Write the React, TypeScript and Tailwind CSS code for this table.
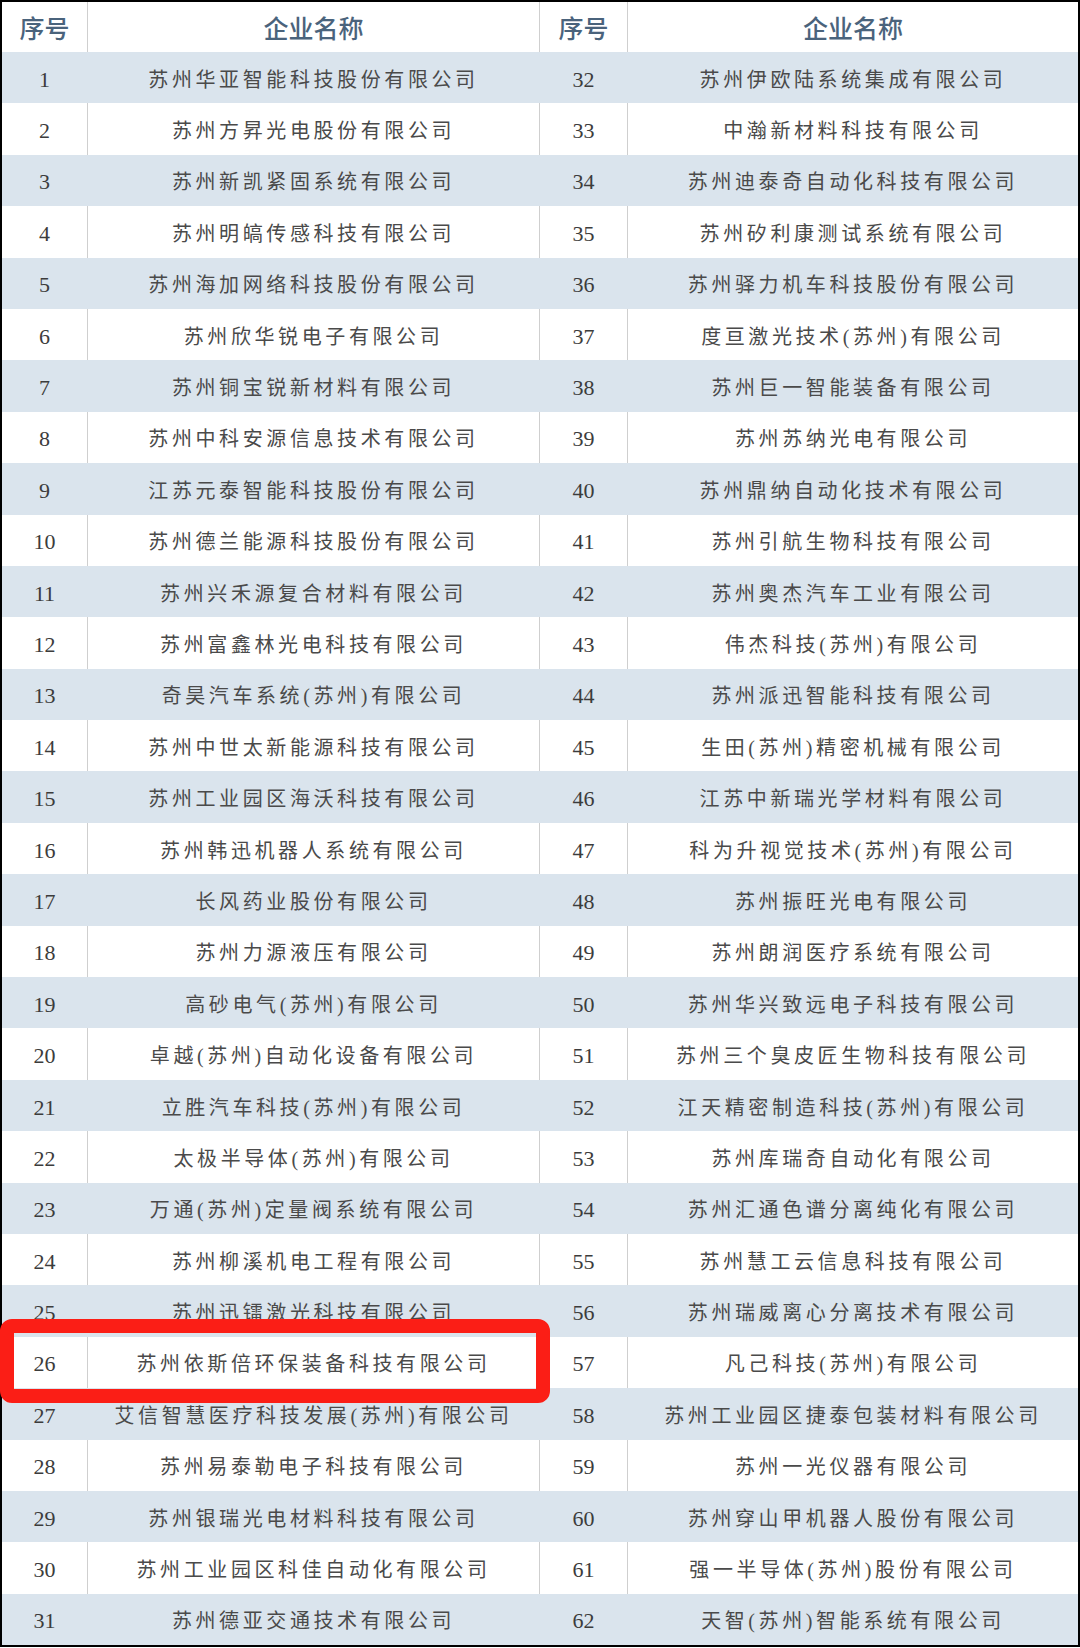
import React from 'react';

const left: string[] = [
  '苏州华亚智能科技股份有限公司',
  '苏州方昇光电股份有限公司',
  '苏州新凯紧固系统有限公司',
  '苏州明皜传感科技有限公司',
  '苏州海加网络科技股份有限公司',
  '苏州欣华锐电子有限公司',
  '苏州铜宝锐新材料有限公司',
  '苏州中科安源信息技术有限公司',
  '江苏元泰智能科技股份有限公司',
  '苏州德兰能源科技股份有限公司',
  '苏州兴禾源复合材料有限公司',
  '苏州富鑫林光电科技有限公司',
  '奇昊汽车系统(苏州)有限公司',
  '苏州中世太新能源科技有限公司',
  '苏州工业园区海沃科技有限公司',
  '苏州韩迅机器人系统有限公司',
  '长风药业股份有限公司',
  '苏州力源液压有限公司',
  '高砂电气(苏州)有限公司',
  '卓越(苏州)自动化设备有限公司',
  '立胜汽车科技(苏州)有限公司',
  '太极半导体(苏州)有限公司',
  '万通(苏州)定量阀系统有限公司',
  '苏州柳溪机电工程有限公司',
  '苏州迅镭激光科技有限公司',
  '苏州依斯倍环保装备科技有限公司',
  '艾信智慧医疗科技发展(苏州)有限公司',
  '苏州易泰勒电子科技有限公司',
  '苏州银瑞光电材料科技有限公司',
  '苏州工业园区科佳自动化有限公司',
  '苏州德亚交通技术有限公司',
];

const right: string[] = [
  '苏州伊欧陆系统集成有限公司',
  '中瀚新材料科技有限公司',
  '苏州迪泰奇自动化科技有限公司',
  '苏州矽利康测试系统有限公司',
  '苏州驿力机车科技股份有限公司',
  '度亘激光技术(苏州)有限公司',
  '苏州巨一智能装备有限公司',
  '苏州苏纳光电有限公司',
  '苏州鼎纳自动化技术有限公司',
  '苏州引航生物科技有限公司',
  '苏州奥杰汽车工业有限公司',
  '伟杰科技(苏州)有限公司',
  '苏州派迅智能科技有限公司',
  '生田(苏州)精密机械有限公司',
  '江苏中新瑞光学材料有限公司',
  '科为升视觉技术(苏州)有限公司',
  '苏州振旺光电有限公司',
  '苏州朗润医疗系统有限公司',
  '苏州华兴致远电子科技有限公司',
  '苏州三个臭皮匠生物科技有限公司',
  '江天精密制造科技(苏州)有限公司',
  '苏州库瑞奇自动化有限公司',
  '苏州汇通色谱分离纯化有限公司',
  '苏州慧工云信息科技有限公司',
  '苏州瑞威离心分离技术有限公司',
  '凡己科技(苏州)有限公司',
  '苏州工业园区捷泰包装材料有限公司',
  '苏州一光仪器有限公司',
  '苏州穿山甲机器人股份有限公司',
  '强一半导体(苏州)股份有限公司',
  '天智(苏州)智能系统有限公司',
];

const cols = 'grid grid-cols-[85px_452px_88px_1fr]';
const nameFont = "font-['Liberation_Serif','Noto_Sans_CJK_SC',serif]";
const numFont = "font-['Liberation_Serif',serif]";

export default function App() {
  return (
    <div className="relative w-[1080px] bg-white">
      <div className="border-2 border-black">
        {/* Header */}
        <div className={`${cols} h-[50px] bg-white text-[25px] font-medium text-[#4a637c] font-['Noto_Sans_CJK_SC',sans-serif]`}>
          <div className="flex items-center justify-center pt-[2px]">序号</div>
          <div className="flex items-center justify-center border-l border-[#cfcfcf] pt-[2px]">企业名称</div>
          <div className="flex items-center justify-center border-l border-[#cfcfcf] pt-[2px]">序号</div>
          <div className="flex items-center justify-center border-l border-[#cfcfcf] pt-[2px]">企业名称</div>
        </div>

        {left.map((name, i) => {
          const blue = i % 2 === 0;
          const line = blue ? 'border-transparent' : 'border-[#cfcfcf]';
          return (
            <div
              key={i}
              className={`${cols} h-[51.4px] ${blue ? 'bg-[#dae4ed]' : 'bg-white'}`}
            >
              <div className={`flex items-center justify-center pt-[3px] text-[22px] text-[#3c3c3c] ${numFont}`}>{i + 1}</div>
              <div className={`flex items-center justify-center border-l ${line} pt-[4px] text-[20px] tracking-[3.6px] text-[#4a4a4a] ${nameFont}`}>
                {name}
              </div>
              <div className={`flex items-center justify-center border-l ${line} pt-[3px] text-[22px] text-[#3c3c3c] ${numFont}`}>{i + 32}</div>
              <div className={`flex items-center justify-center border-l ${line} pt-[4px] text-[20px] tracking-[3.6px] text-[#4a4a4a] ${nameFont}`}>
                {right[i]}
              </div>
            </div>
          );
        })}
      </div>

      {/* Highlight box */}
      <div className="absolute left-0 top-[1319px] h-[84px] w-[550px] rounded-[12px] border-[14px] border-[#fb1e16]" />
    </div>
  );
}
